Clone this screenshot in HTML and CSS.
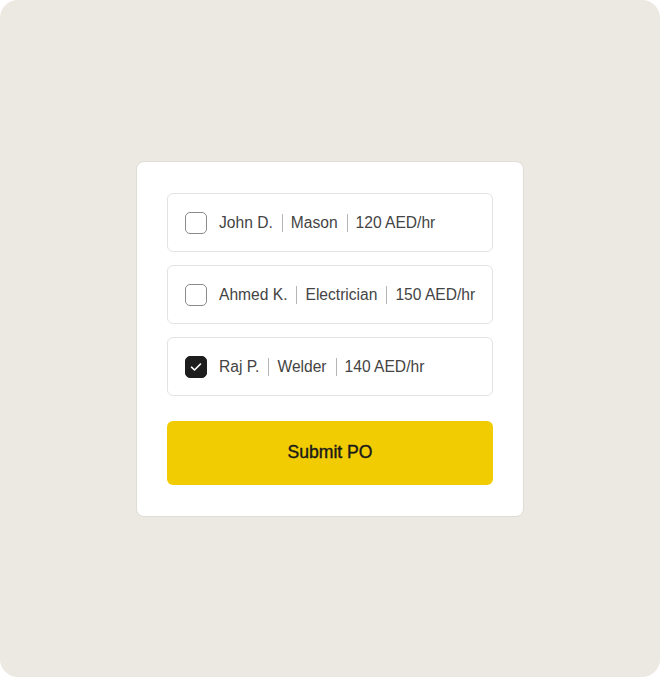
FILE: index.html
```html
<!DOCTYPE html>
<html>
<head>
<meta charset="utf-8">
<link rel="stylesheet" href="styles.css">
</head>
<body>
<div class="frame">
  <div class="card">
    <div class="list">
      <label class="row">
        <span class="box"></span>
        <span class="cell">John D.</span><span class="sep"></span><span class="cell">Mason</span><span class="sep"></span><span class="cell">120 AED/hr</span>
      </label>
      <label class="row">
        <span class="box"></span>
        <span class="cell">Ahmed K.</span><span class="sep"></span><span class="cell">Electrician</span><span class="sep"></span><span class="cell">150 AED/hr</span>
      </label>
      <label class="row">
        <span class="box checked"><svg width="12" height="10" viewBox="0 0 12 10"><path d="M1.5 5.2 L4.5 8 L10.5 2" fill="none" stroke="#fff" stroke-width="1.6" stroke-linecap="round" stroke-linejoin="round"/></svg></span>
        <span class="cell">Raj P.</span><span class="sep"></span><span class="cell">Welder</span><span class="sep"></span><span class="cell">140 AED/hr</span>
      </label>
    </div>
    <button class="submit">Submit PO</button>
  </div>
</div>
</body>
</html>
```
FILE: styles.css
```css
html, body {
  margin: 0;
  padding: 0;
  background: #ffffff;
}
.frame {
  width: 660px;
  height: 677px;
  background: #ECE8E2;
  border-radius: 18px;
  display: flex;
  align-items: center;
  justify-content: center;
  font-family: "Liberation Sans", Arial, sans-serif;
}
.card {
  box-sizing: border-box;
  width: 388px;
  background: #ffffff;
  border: 1px solid #e0ddd8;
  border-radius: 8px;
  padding: 31px 30px 31px 30px;
  display: flex;
  flex-direction: column;
  gap: 25px;
}
.list {
  display: flex;
  flex-direction: column;
  gap: 13px;
}
.row {
  box-sizing: border-box;
  height: 59px;
  border: 1px solid #e3e3e3;
  border-radius: 6px;
  display: flex;
  align-items: center;
  padding: 1px 17px 0;
  font-size: 15.6px;
  color: #444444;
}
.box {
  box-sizing: border-box;
  width: 22px;
  height: 22px;
  border: 1.5px solid #8a8a8a;
  border-radius: 5px;
  margin-right: 12px;
  flex: none;
  display: flex;
  align-items: center;
  justify-content: center;
}
.box.checked {
  background: #1d1d1d;
  border-color: #1d1d1d;
}
.cell {
  white-space: nowrap;
}
.sep {
  width: 1px;
  height: 18px;
  background: #b5b5b5;
  margin: 0 8px 0 9px;
  flex: none;
}
.submit {
  height: 64px;
  border: none;
  border-radius: 6px;
  background: #F2CC03;
  color: #1a1a1a;
  font-family: "Liberation Sans", Arial, sans-serif;
  font-size: 17.6px;
  font-weight: 400;
  -webkit-text-stroke: 0.4px #1a1a1a;
  cursor: pointer;
}
```
